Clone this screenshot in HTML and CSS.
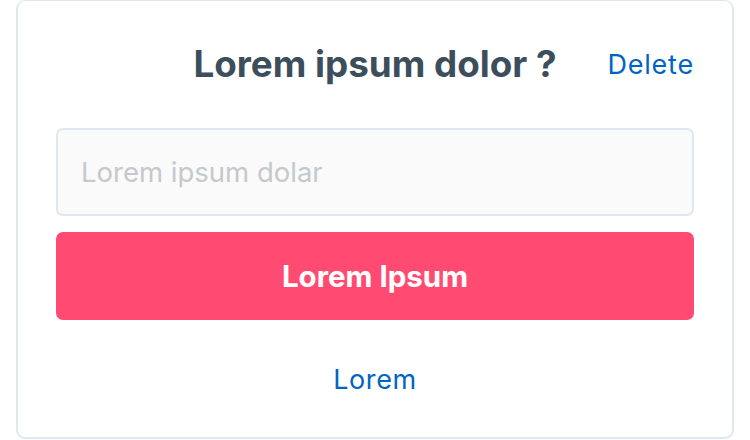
FILE: index.html
```html
<!DOCTYPE html>
<html>
<head>
<meta charset="utf-8">
<link rel="stylesheet" href="styles.css">
</head>
<body>
<div class="card">
  <div class="header">
    <span class="spacer"></span>
    <h1 class="title">Lorem ipsum dolor ?</h1>
    <a class="delete">Delete</a>
  </div>
  <input class="field" type="text" placeholder="Lorem ipsum dolar">
  <button class="primary">Lorem Ipsum</button>
  <a class="secondary">Lorem</a>
</div>
</body>
</html>
```
FILE: styles.css
```css
html, body {
  margin: 0;
  padding: 0;
  background: #ffffff;
}
body {
  padding: 0 16px;
  font-family: "Inter", "Open Sans", sans-serif;
}
.card {
  box-sizing: border-box;
  height: 439px;
  border: 2px solid #dfe8f0;
  border-top-width: 1px;
  border-radius: 9px;
  padding: 0 38px;
  display: flex;
  flex-direction: column;
}
.header {
  display: grid;
  grid-template-columns: 1fr auto 1fr;
  align-items: center;
  height: 127px;
  padding-bottom: 1px;
  box-sizing: border-box;
}
.title {
  margin: 0;
  font-size: 36.8px;
  font-weight: 700;
  color: #3c4e5b;
  line-height: 48px;
}
.delete {
  justify-self: end;
  font-size: 27px;
  letter-spacing: 0.8px;
  color: #0065c1;
}
.field {
  box-sizing: border-box;
  height: 88px;
  border: 2px solid #dfe8f0;
  border-radius: 7px;
  background: #fafafa;
  padding: 0 23px;
  font-family: inherit;
  font-size: 27.5px;
  outline: none;
}
.field::placeholder {
  color: #c4c9cd;
}
.primary {
  margin-top: 16px;
  height: 88px;
  border: none;
  border-radius: 7px;
  background: #ff4b72;
  color: #ffffff;
  font-family: inherit;
  font-size: 29.5px;
  font-weight: 700;
}
.secondary {
  margin-top: 43px;
  align-self: center;
  font-size: 27px;
  letter-spacing: 0.6px;
  color: #0065c1;
}
```
